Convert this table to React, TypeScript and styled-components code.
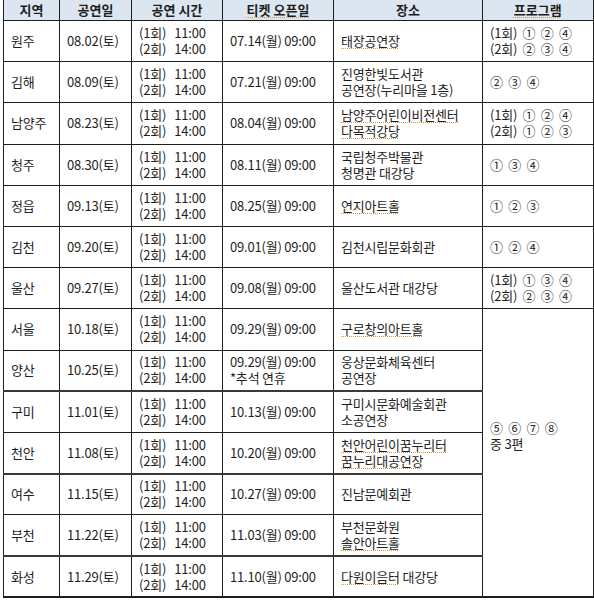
import React from 'react';
import styled, { createGlobalStyle } from 'styled-components';

const GlobalStyle = createGlobalStyle`
  html, body {
    margin: 0;
    padding: 0;
    background: #fff;
  }
  body {
    font-family: 'Noto Sans CJK KR', 'Noto Sans', sans-serif;
    color: #1e1e1e;
  }
`;

const Page = styled.div`
  width: 594px;
  height: 600px;
  overflow: hidden;
  padding-left: 3px;
  box-sizing: border-box;
`;

const Table = styled.table`
  width: 590px;
  table-layout: fixed;
  border-collapse: collapse;
  font-size: 13px;
  line-height: 16px;
  border-right: 2px solid #1e1e1e;
  border-bottom: 2px solid #1e1e1e;
  border-left: 1px solid #1e1e1e;
`;

const HeadCell = styled.th`
  height: 20px;
  padding: 0;
  background: #dce6f1;
  font-weight: 700;
  font-size: 13px;
  line-height: 16px;
  text-align: center;
  border: 1px solid #1e1e1e;
  border-top: none;
  white-space: nowrap;
`;

const Row = styled.tr<{ $thick?: boolean }>`
  height: 41.2px;
  & > td {
    border-top: ${({ $thick }) => ($thick ? '2px solid #3a3a3a' : '1px solid #1e1e1e')};
  }
`;

const Cell = styled.td<{ $padBottom?: number }>`
  padding: 0 0 ${({ $padBottom }) => $padBottom ?? 0}px 7px;
  border: 1px solid #1e1e1e;
  vertical-align: middle;
  text-align: left;
  white-space: nowrap;
  letter-spacing: -0.2px;
`;

const Line = styled.div``;

const Squiggle = styled.span`
  text-decoration: underline dotted #d9963a;
  text-decoration-thickness: 1px;
  text-underline-offset: 2px;
`;

type Text = string | React.ReactNode;

interface Show {
  region: string;
  date: string;
  open: Text[];
  venue: Text[];
  program?: Text[];
  thick?: boolean;
}

const times = ['(1회)\u00a0\u00a0 11:00', '(2회)\u00a0\u00a0 14:00'];

const shows: Show[] = [
  { region: '원주', date: '08.02(토)', open: ['07.14(월) 09:00'], venue: [<Squiggle>태장공연장</Squiggle>], program: ['(1회)  ①  ②  ④', '(2회)  ②  ③  ④'] },
  { region: '김해', date: '08.09(토)', open: ['07.21(월) 09:00'], venue: ['진영한빛도서관', '공연장(누리마을 1층)'], program: ['②  ③  ④'] },
  { region: '남양주', date: '08.23(토)', open: ['08.04(월) 09:00'], venue: [<Squiggle>남양주어린이비전센터</Squiggle>, <Squiggle>다목적강당</Squiggle>], program: ['(1회)  ①  ②  ④', '(2회)  ①  ②  ③'] },
  { region: '청주', date: '08.30(토)', open: ['08.11(월) 09:00'], venue: ['국립청주박물관', '청명관 대강당'], program: ['①  ③  ④'] },
  { region: '정읍', date: '09.13(토)', open: ['08.25(월) 09:00'], venue: [<Squiggle>연지아트홀</Squiggle>], program: ['①  ②  ③'] },
  { region: '김천', date: '09.20(토)', open: ['09.01(월) 09:00'], venue: ['김천시립문화회관'], program: ['①  ②  ④'] },
  { region: '울산', date: '09.27(토)', open: ['09.08(월) 09:00'], venue: ['울산도서관 대강당'], program: ['(1회)  ①  ③  ④', '(2회)  ②  ③  ④'] },
  { region: '서울', date: '10.18(토)', open: ['09.29(월) 09:00'], venue: [<Squiggle>구로창의아트홀</Squiggle>] },
  { region: '양산', date: '10.25(토)', open: ['09.29(월) 09:00', '*추석 연휴'], venue: ['웅상문화체육센터', '공연장'] },
  { region: '구미', date: '11.01(토)', open: ['10.13(월) 09:00'], venue: ['구미시문화예술회관', '소공연장'], thick: true },
  { region: '천안', date: '11.08(토)', open: ['10.20(월) 09:00'], venue: [<Squiggle>천안어린이꿈누리터</Squiggle>, <Squiggle>꿈누리대공연장</Squiggle>] },
  { region: '여수', date: '11.15(토)', open: ['10.27(월) 09:00'], venue: ['진남문예회관'], thick: true },
  { region: '부천', date: '11.22(토)', open: ['11.03(월) 09:00'], venue: ['부천문화원', <Squiggle>솔안아트홀</Squiggle>] },
  { region: '화성', date: '11.29(토)', open: ['11.10(월) 09:00'], venue: [<><Squiggle>다원이음터</Squiggle> 대강당</>], thick: true },
];

const widths = [56, 72, 91, 111, 149, 111];

const Lines = ({ items }: { items: Text[] }) => (
  <>
    {items.map((t, i) => (
      <Line key={i}>{typeof t === 'string' ? t.replace(/ /g, '\u00a0') : t}</Line>
    ))}
  </>
);

export default function App() {
  const mergedStart = shows.findIndex((s) => !s.program);
  const mergedSpan = shows.length - mergedStart;

  return (
    <>
      <GlobalStyle />
      <Page>
        <Table>
          <colgroup>
            {widths.map((w, i) => (
              <col key={i} style={{ width: w }} />
            ))}
          </colgroup>
          <thead>
            <tr>
              <HeadCell>지역</HeadCell>
              <HeadCell>공연일</HeadCell>
              <HeadCell>공연 시간</HeadCell>
              <HeadCell>
                <Squiggle>티켓 오픈일</Squiggle>
              </HeadCell>
              <HeadCell>장소</HeadCell>
              <HeadCell>
                <Squiggle>프로그램</Squiggle>
              </HeadCell>
            </tr>
          </thead>
          <tbody>
            {shows.map((s, i) => (
              <Row key={s.region} $thick={s.thick}>
                <Cell>{s.region}</Cell>
                <Cell>{s.date}</Cell>
                <Cell>
                  <Lines items={times} />
                </Cell>
                <Cell>
                  <Lines items={s.open} />
                </Cell>
                <Cell>
                  <Lines items={s.venue} />
                </Cell>
                {s.program && (
                  <Cell>
                    <Lines items={s.program} />
                  </Cell>
                )}
                {i === mergedStart && (
                  <Cell rowSpan={mergedSpan} $padBottom={34}>
                    <Lines items={['⑤  ⑥  ⑦  ⑧', '중 3편']} />
                  </Cell>
                )}
              </Row>
            ))}
          </tbody>
        </Table>
      </Page>
    </>
  );
}
